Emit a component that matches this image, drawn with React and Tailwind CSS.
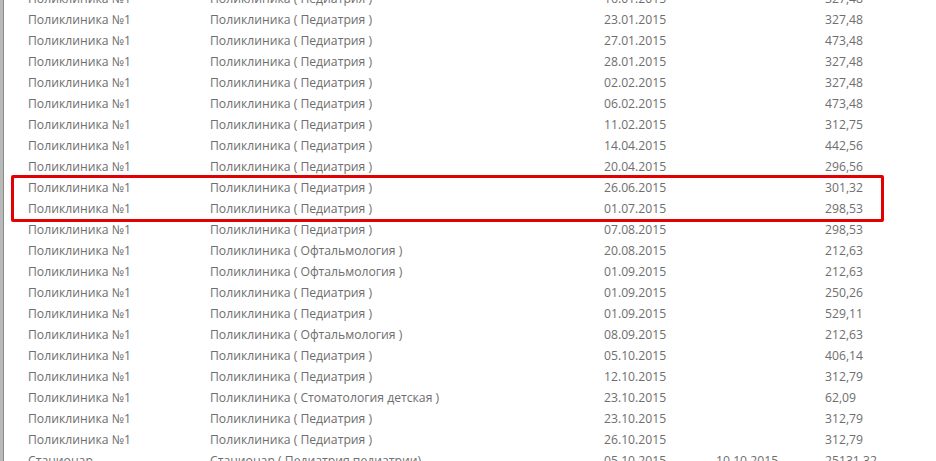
import React from "react";

const P = "Поликлиника №1";
const ped = "Поликлиника ( Педиатрия )";
const oft = "Поликлиника ( Офтальмология )";
const stom = "Поликлиника ( Стоматология детская )";

const rows = [
  [P, ped, "16.01.2015", "", "327,48"],
  [P, ped, "23.01.2015", "", "327,48"],
  [P, ped, "27.01.2015", "", "473,48"],
  [P, ped, "28.01.2015", "", "327,48"],
  [P, ped, "02.02.2015", "", "327,48"],
  [P, ped, "06.02.2015", "", "473,48"],
  [P, ped, "11.02.2015", "", "312,75"],
  [P, ped, "14.04.2015", "", "442,56"],
  [P, ped, "20.04.2015", "", "296,56"],
  [P, ped, "26.06.2015", "", "301,32"],
  [P, ped, "01.07.2015", "", "298,53"],
  [P, ped, "07.08.2015", "", "298,53"],
  [P, oft, "20.08.2015", "", "212,63"],
  [P, oft, "01.09.2015", "", "212,63"],
  [P, ped, "01.09.2015", "", "250,26"],
  [P, ped, "01.09.2015", "", "529,11"],
  [P, oft, "08.09.2015", "", "212,63"],
  [P, ped, "05.10.2015", "", "406,14"],
  [P, ped, "12.10.2015", "", "312,79"],
  [P, stom, "23.10.2015", "", "62,09"],
  [P, ped, "23.10.2015", "", "312,79"],
  [P, ped, "26.10.2015", "", "312,79"],
  ["Стационар", "Стационар ( Педиатрия педиатрии)", "05.10.2015", "10.10.2015", "25131,32"],
];

export default function App() {
  return (
    <div className="relative w-[936px] h-[461px] overflow-hidden bg-white flex">
      <div className="w-[4px] h-full bg-[#b9b9b9] border-r border-[#8c8c8c] shrink-0" />
      <div
        className="flex-1 mt-[-12px] text-[12.2px] text-[#6e6e6e]"
        style={{ fontFamily: '"Open Sans", "Noto Sans", sans-serif' }}
      >
        {rows.map((r, i) => (
          <div
            key={i}
            className="grid grid-cols-[182px_394px_112px_109px_1fr] h-[21px] items-center pl-[24px] leading-[21px] whitespace-nowrap"
          >
            <div>{r[0]}</div>
            <div>{r[1]}</div>
            <div>{r[2]}</div>
            <div>{r[3]}</div>
            <div>{r[4]}</div>
          </div>
        ))}
      </div>
      <div className="absolute left-[11px] top-[175px] w-[873px] h-[47px] border-[3px] border-[#e30000] rounded-[2px] pointer-events-none" />
    </div>
  );
}
